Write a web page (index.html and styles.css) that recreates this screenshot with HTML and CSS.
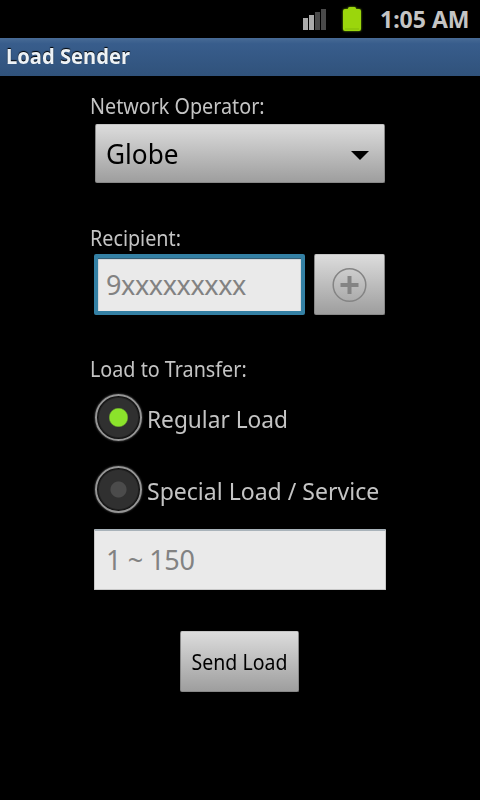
FILE: index.html
```html
<!DOCTYPE html>
<html>
<head>
<meta charset="utf-8">
<meta name="viewport" content="width=device-width, initial-scale=1">
<title>Load Sender</title>
<link rel="stylesheet" href="styles.css">
</head>
<body>

<div class="statusbar">
  <svg class="signal" width="24" height="22" viewBox="0 0 24 22">
    <rect x="0" y="9" width="5" height="12" fill="#aaa"/>
    <rect x="6" y="6" width="5" height="15" fill="#aaa"/>
    <rect x="12" y="3" width="5" height="18" fill="#4a4a4a"/>
    <rect x="18" y="0" width="5" height="21" fill="#4a4a4a"/>
  </svg>
  <svg class="battery" width="18" height="24" viewBox="0 0 18 24">
    <path d="M5 2V1.500Q5 0 6.500 0H11.500Q13 0 13 1.500V2H16Q18 2 18 4V22Q18 24 16 24H2Q0 24 0 22V4Q0 2 2 2Z" fill="#9bd60c"/>
    <path d="M2 22H16" stroke="#83bb0a" stroke-width="1"/>
  </svg>
  <span class="time">1:05 AM</span>
</div>

<div class="titlebar"><h1>Load Sender</h1></div>

<form class="container">
  <label class="label operator-label" for="operator">Network Operator:</label>
  <button type="button" class="spinner" id="operator">
    <span>Globe</span>
    <svg width="18" height="9" viewBox="0 0 18 9"><path d="M0 0H18L9 9Z" fill="#000"/></svg>
  </button>

  <label class="label recipient-label" for="recipient">Recipient:</label>
  <div class="row">
    <input type="text" class="recipient" placeholder="9xxxxxxxxx" name="recipient" id="recipient">
    <button type="button" class="addbtn" aria-label="Add">
      <svg width="36" height="36" viewBox="0 0 36 36">
        <circle cx="17.500" cy="18" r="16.300" fill="none" stroke="#848484" stroke-width="1.500"/>
        <path d="M17.500 9V27M8.500 18H26.500" stroke="#848484" stroke-width="4"/>
      </svg>
    </button>
  </div>

  <div class="label load-label">Load to Transfer:</div>
  <label class="radio">
    <input type="radio" name="load" checked>
    <span class="regular">Regular Load</span>
  </label>
  <label class="radio">
    <input type="radio" name="load">
    <span class="special">Special Load / Service</span>
  </label>
  <input type="text" class="amount" placeholder="1 ~ 150" name="amount">

  <button type="button" class="sendbtn"><span>Send Load</span></button>
</form>

</body>
</html>
```
FILE: styles.css
```css
* {
  box-sizing: border-box;
}

body {
  margin: 0;
  background: #000;
  color: #c4c4c4;
  font-family: "Noto Sans", "Open Sans", sans-serif;
}

svg {
  display: block;
  flex: none;
}

.statusbar {
  display: flex;
  align-items: flex-start;
  height: 38px;
  padding-left: 303px;
}

.signal {
  margin-top: 9px;
}

.battery {
  margin: 7px 0 0 16px;
  filter: drop-shadow(0 0 1px #6d9d08);
}

.time {
  margin: 3px 0 0 19px;
  font-size: 23px;
  line-height: 32px;
  font-weight: bold;
  white-space: nowrap;
}

.titlebar {
  height: 38px;
  padding: 4px 6px;
  background: linear-gradient(#486b95, #385d8c 15%, #30527b);
}

h1 {
  margin: 0;
  font-size: 21px;
  line-height: 29px;
  color: #edf2f6;
  text-shadow: 0 -1px 1px #000;
  transform: scaleX(0.96);
  transform-origin: left;
}

.container {
  display: flex;
  flex-direction: column;
  align-items: flex-start;
  padding: 16px 94px 0;
}

.label {
  margin-left: -4px;
  height: 28px;
  font-size: 21px;
  line-height: 28px;
  white-space: nowrap;
  transform: scaleX(0.94);
  transform-origin: left;
}

button {
  padding: 0;
  border: 1px solid #888;
  border-top-color: #c4c4c4;
  border-radius: 2px;
  background: linear-gradient(#dcdcdc, #9e9e9e);
  font-family: inherit;
  color: #000;
}

.spinner {
  display: flex;
  align-items: center;
  justify-content: space-between;
  width: 290px;
  height: 59px;
  margin: 4px 0 0 1px;
  padding: 0 15px 0 10px;
  font-size: 27px;
}

.spinner span {
  transform: scaleX(0.97);
  transform-origin: left;
}

.spinner svg {
  margin-top: 4px;
}

input[type=text] {
  height: 61px;
  padding: 0 11px 2px;
  border: 1px solid #c8c8c8;
  border-top: 2px solid #a9b3ba;
  border-radius: 1px;
  background: #eaeaea;
  font-family: inherit;
  font-size: 27px;
  letter-spacing: -0.4px;
  outline: none;
}

input::placeholder {
  color: #828282;
}

.recipient-label {
  margin-top: 41px;
}

.row {
  display: flex;
  gap: 9px;
  margin-top: 2px;
}

input.recipient {
  width: 211px;
  padding: 0 8px 1px;
  border: 4px solid #3480a4;
  border-radius: 2px;
  box-shadow: inset 0 1px 1px #234e68;
}

.addbtn {
  display: flex;
  align-items: center;
  justify-content: center;
  width: 71px;
  height: 61px;
}

.load-label {
  margin-top: 40px;
}

.radio {
  display: flex;
  align-items: center;
  height: 72px;
  margin-left: 1px;
  font-size: 24px;
  white-space: nowrap;
}

.load-label + .radio {
  margin-top: -2px;
}

input[type=radio] {
  appearance: none;
  width: 47px;
  height: 47px;
  margin: 0 5px 0 0;
  border: 2px solid #959595;
  border-radius: 50%;
  background: radial-gradient(circle, #4b4b4b 7.5px, #303030 8.5px 19px, #111 21px);
  box-shadow: 0 0 2px #777;
}

input[type=radio]:checked {
  background: radial-gradient(circle, #8be32b 8.5px, #303030 10px 19px, #111 21px);
}

.radio span {
  padding-top: 3px;
  transform-origin: left;
}

.regular {
  transform: scaleX(0.945);
}

.special {
  transform: scaleX(0.96);
}

.amount {
  width: 292px;
  margin-top: 4px;
}

.sendbtn {
  width: 119px;
  height: 61px;
  margin: 41px 0 0 86px;
  font-size: 21px;
  white-space: nowrap;
}

.sendbtn span {
  display: block;
  transform: scaleX(0.93);
}
```
